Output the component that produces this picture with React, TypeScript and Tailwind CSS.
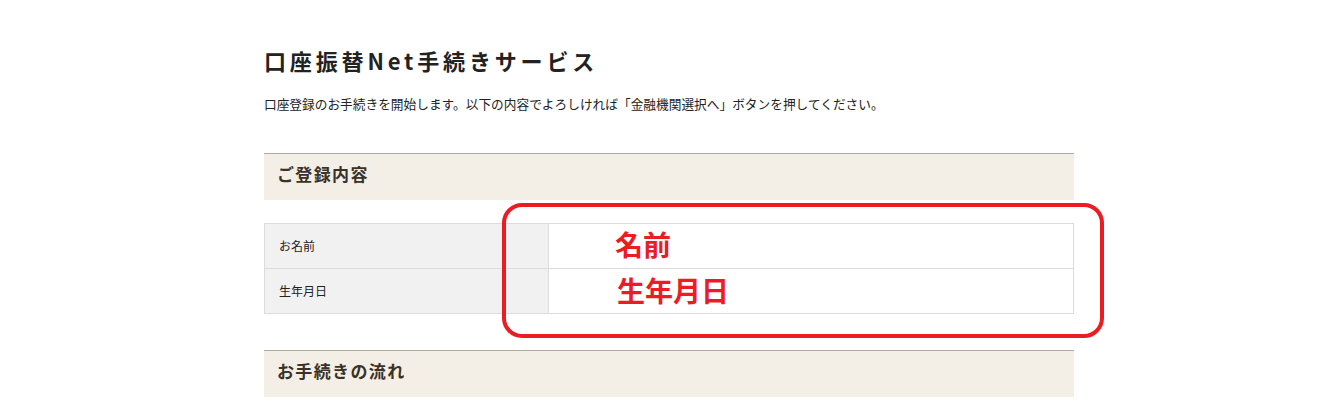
import React from "react";

const font = { fontFamily: '"Noto Sans CJK JP", "Noto Sans", sans-serif' };

function SectionHeader({ children }: { children: React.ReactNode }) {
  return (
    <div className="h-[47px] border-t border-[#b3aa9f] bg-[#f3efe7] pl-[13px] pb-[7px] flex items-center">
      <h2 className="text-[17px] font-bold text-[#3a3226] tracking-[0.08em] leading-none">{children}</h2>
    </div>
  );
}

export default function App() {
  return (
    <div className="w-[1340px] h-[415px] bg-white overflow-hidden relative text-[#222]" style={font}>
      <div className="w-[810px] ml-[264px] pt-[45px]">
        <h1 className="text-[22px] font-bold tracking-[0.175em] text-[#222] leading-[30px]">口座振替Net手続きサービス</h1>
        <p className="mt-[20px] text-[12.7px] leading-[18px] text-[#222]">
          口座登録のお手続きを開始します。以下の内容でよろしければ「金融機関選択へ」ボタンを押してください。
        </p>
        <div className="mt-[40px]">
          <SectionHeader>ご登録内容</SectionHeader>
        </div>
        <table className="mt-[23px] w-full border-collapse text-[12px]">
          <tbody>
            <tr className="h-[45px]">
              <th className="w-[284px] bg-[#f1f1f1] border border-[#dcdcdc] text-left font-normal pl-[14px]">お名前</th>
              <td className="border border-[#dcdcdc]"></td>
            </tr>
            <tr className="h-[45px]">
              <th className="w-[284px] bg-[#f1f1f1] border border-[#dcdcdc] text-left font-normal pl-[14px]">生年月日</th>
              <td className="border border-[#dcdcdc]"></td>
            </tr>
          </tbody>
        </table>
        <div className="mt-[36px]">
          <SectionHeader>お手続きの流れ</SectionHeader>
        </div>
      </div>
      <div className="absolute left-[502px] top-[203px] w-[602px] h-[135px] border-[4px] border-[#ec1c24] rounded-[20px] pointer-events-none" />
      <div className="absolute left-[615px] top-[227px] text-[28px] font-bold text-[#ec1c24] leading-[34px]">名前</div>
      <div className="absolute left-[617px] top-[273px] text-[28px] font-bold text-[#ec1c24] leading-[34px]">生年月日</div>
    </div>
  );
}
